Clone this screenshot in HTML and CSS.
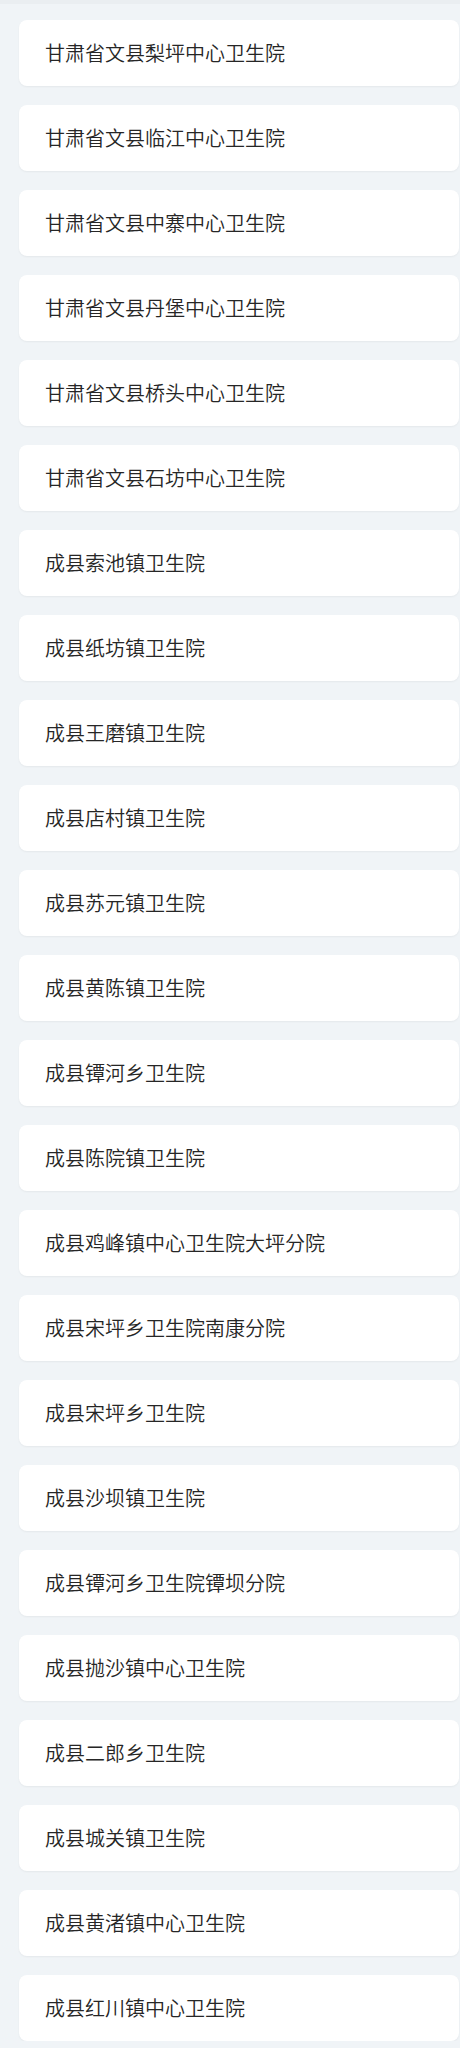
FILE: index.html
```html
<!DOCTYPE html>
<html lang="zh-CN">
<head>
<meta charset="utf-8">
<link rel="stylesheet" href="styles.css">
</head>
<body>
<div class="topbar"></div>
<ul class="list">
<li class="card">甘肃省文县梨坪中心卫生院</li>
<li class="card">甘肃省文县临江中心卫生院</li>
<li class="card">甘肃省文县中寨中心卫生院</li>
<li class="card">甘肃省文县丹堡中心卫生院</li>
<li class="card">甘肃省文县桥头中心卫生院</li>
<li class="card">甘肃省文县石坊中心卫生院</li>
<li class="card">成县索池镇卫生院</li>
<li class="card">成县纸坊镇卫生院</li>
<li class="card">成县王磨镇卫生院</li>
<li class="card">成县店村镇卫生院</li>
<li class="card">成县苏元镇卫生院</li>
<li class="card">成县黄陈镇卫生院</li>
<li class="card">成县镡河乡卫生院</li>
<li class="card">成县陈院镇卫生院</li>
<li class="card">成县鸡峰镇中心卫生院大坪分院</li>
<li class="card">成县宋坪乡卫生院南康分院</li>
<li class="card">成县宋坪乡卫生院</li>
<li class="card">成县沙坝镇卫生院</li>
<li class="card">成县镡河乡卫生院镡坝分院</li>
<li class="card">成县抛沙镇中心卫生院</li>
<li class="card">成县二郎乡卫生院</li>
<li class="card">成县城关镇卫生院</li>
<li class="card">成县黄渚镇中心卫生院</li>
<li class="card">成县红川镇中心卫生院</li>
</ul>
</body>
</html>
```
FILE: styles.css
```css
html, body {
  margin: 0;
  padding: 0;
  background: #f0f4f7;
}
body {
  font-family: "Noto Sans CJK SC", "Noto Sans", sans-serif;
  color: #262626;
}
.topbar {
  height: 4px;
  background: #eaeef1;
}
.list {
  list-style: none;
  margin: 0;
  padding: 16px 1px 0 19px;
  display: flex;
  flex-direction: column;
  gap: 19px;
}
.card {
  height: 66px;
  box-sizing: border-box;
  background: #fff;
  border-radius: 8px;
  box-shadow: 0 1px 2px rgba(0, 0, 0, 0.05);
  padding-left: 26px;
  display: flex;
  align-items: center;
  font-size: 20px;
  font-weight: 350;
  line-height: 1;
}
```
